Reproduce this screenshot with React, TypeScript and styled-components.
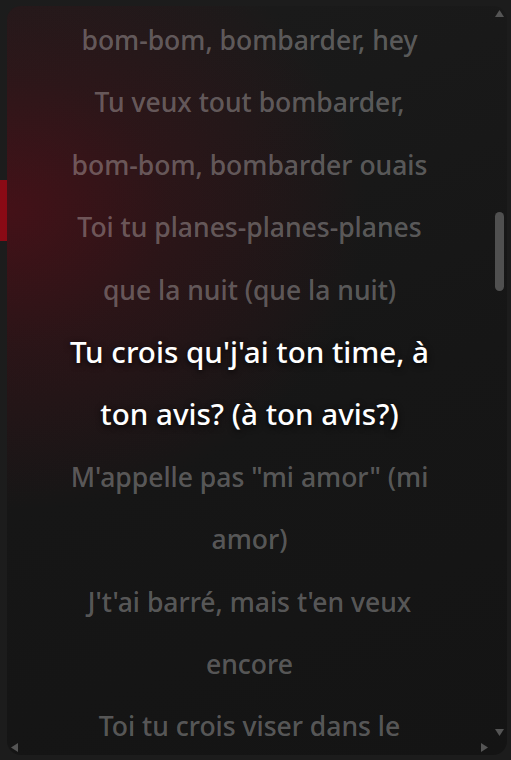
import React, { useLayoutEffect, useRef } from "react";
import styled, { createGlobalStyle } from "styled-components";

const GlobalStyle = createGlobalStyle`
  html, body {
    margin: 0;
    padding: 0;
    background: #1c1c1c;
    overflow: hidden;
  }
  body {
    font-family: "Noto Sans", "Open Sans", sans-serif;
  }
`;

const Shell = styled.div`
  display: flex;
  width: 511px;
  height: 760px;
  background: #1c1c1c;
`;

const Rail = styled.div`
  width: 7px;
  flex: none;
  display: flex;
  flex-direction: column;
  padding-top: 180px;
`;

const RailMarker = styled.div`
  width: 7px;
  height: 61px;
  background: #8a0a15;
`;

const Panel = styled.div`
  position: relative;
  margin-top: 6px;
  width: 500px;
  height: 749px;
  flex: none;
  border-radius: 14px;
  overflow: hidden;
  background:
    radial-gradient(ellipse 360px 300px at 0px 205px, rgba(118, 8, 22, 0.46) 0%, rgba(118, 8, 22, 0.2) 45%, rgba(118, 8, 22, 0) 100%),
    linear-gradient(160deg, #1b1b1b 0%, #161616 55%, #141414 100%);
`;

const Scroller = styled.div`
  width: 100%;
  height: 100%;
  overflow: hidden scroll;
  scrollbar-width: none;
  padding-right: 15px;
  box-sizing: border-box;
  &::-webkit-scrollbar {
    display: none;
  }
`;

const LyricList = styled.div`
  display: flex;
  flex-direction: column;
  align-items: center;
  padding: 1780px 0 4040px;
`;

const Line = styled.p<{ $active?: boolean }>`
  margin: 0;
  text-align: center;
  white-space: nowrap;
  line-height: 62.4px;
  font-weight: 500;
  font-size: ${(p) => (p.$active ? "29.6px" : "26.5px")};
  color: ${(p) => (p.$active ? "#ffffff" : "rgba(255, 255, 255, 0.3)")};
  text-shadow: ${(p) => (p.$active ? "0 2px 6px rgba(0, 0, 0, 0.85)" : "none")};
`;

/* Overlay scrollbars drawn over the lyric view */
const VBar = styled.div`
  position: absolute;
  top: 0;
  right: 0;
  width: 15px;
  bottom: 15px;
  display: flex;
  flex-direction: column;
  align-items: center;
`;

const HBar = styled.div`
  position: absolute;
  left: 0;
  right: 15px;
  bottom: 0;
  height: 15px;
  display: flex;
  align-items: center;
  justify-content: space-between;
`;

const ArrowBox = styled.div`
  width: 15px;
  height: 15px;
  flex: none;
  display: flex;
  align-items: center;
  justify-content: center;
`;

const Track = styled.div`
  flex: 1;
  width: 100%;
  display: flex;
  flex-direction: column;
  align-items: center;
`;

const Thumb = styled.div`
  width: 9px;
  border-radius: 5px;
  background: #505050;
`;

type Dir = "up" | "down" | "left" | "right";

const arrowPoints: Record<Dir, string> = {
  up: "4.5,0 9,7 0,7",
  down: "0,0 9,0 4.5,7",
  left: "7,0 7,9 0,4.5",
  right: "0,0 7,4.5 0,9",
};

function Arrow({ dir }: { dir: Dir }) {
  const vertical = dir === "up" || dir === "down";
  const w = vertical ? 9 : 7;
  const h = vertical ? 7 : 9;
  return (
    <ArrowBox>
      <svg width={w} height={h} viewBox={`0 0 ${w} ${h}`}>
        <polygon points={arrowPoints[dir]} fill="#555555" />
      </svg>
    </ArrowBox>
  );
}

type Lyric = { lines: string[]; active?: boolean };

const lyrics: Lyric[] = [
  { lines: ["bom-bom, bombarder, hey"] },
  { lines: ["Tu veux tout bombarder,", "bom-bom, bombarder ouais"] },
  { lines: ["Toi tu planes-planes-planes", "que la nuit (que la nuit)"] },
  { lines: ["Tu crois qu'j'ai ton time, à", "ton avis? (à ton avis?)"], active: true },
  { lines: ['M\'appelle pas "mi amor" (mi', "amor)"] },
  { lines: ["J't'ai barré, mais t'en veux", "encore"] },
  { lines: ["Toi tu crois viser dans le"] },
];

const SCROLL_TOP = 1777;
const CONTENT_HEIGHT = 6560;

export default function App() {
  const scrollerRef = useRef<HTMLDivElement>(null);

  useLayoutEffect(() => {
    if (scrollerRef.current) scrollerRef.current.scrollTop = SCROLL_TOP;
  }, []);

  const viewH = 749 - 15;
  const trackH = 749 - 15 - 30;
  const thumbH = Math.round((trackH * viewH) / CONTENT_HEIGHT);
  const thumbTop = Math.round(((trackH - thumbH) * SCROLL_TOP) / (CONTENT_HEIGHT - viewH));

  return (
    <>
      <GlobalStyle />
      <Shell>
        <Rail>
          <RailMarker />
        </Rail>
        <Panel>
          <Scroller ref={scrollerRef}>
            <LyricList>
              {lyrics.map((l, i) => (
                <Line key={i} $active={l.active}>
                  {l.lines.map((t, j) => (
                    <React.Fragment key={j}>
                      {j > 0 && <br />}
                      {t}
                    </React.Fragment>
                  ))}
                </Line>
              ))}
            </LyricList>
          </Scroller>
          <VBar>
            <Arrow dir="up" />
            <Track>
              <Thumb style={{ marginTop: thumbTop, height: thumbH }} />
            </Track>
            <Arrow dir="down" />
          </VBar>
          <HBar>
            <Arrow dir="left" />
            <Arrow dir="right" />
          </HBar>
        </Panel>
      </Shell>
    </>
  );
}
